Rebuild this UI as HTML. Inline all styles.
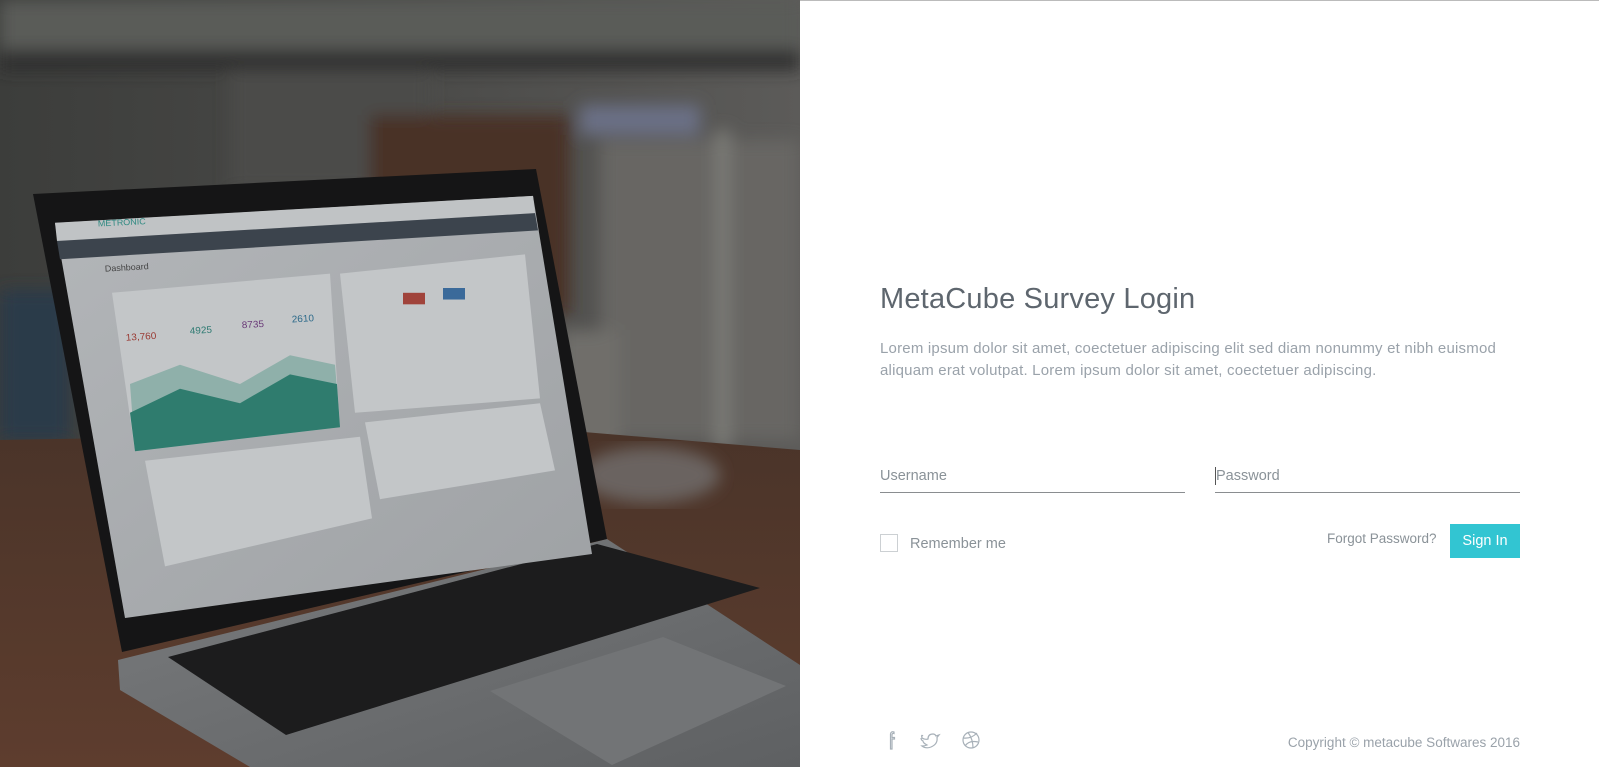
<!DOCTYPE html>
<html><head><meta charset="utf-8"><style>
*{margin:0;padding:0;box-sizing:border-box}
html,body{width:1599px;height:767px;overflow:hidden;background:#fff;font-family:"Liberation Sans",sans-serif}
#left{position:absolute;left:0;top:0;width:800px;height:767px}
#right{position:absolute;left:800px;top:0;width:799px;height:767px;border-top:1px solid #bbb}
.t{position:absolute;white-space:nowrap}
</style></head><body>
<div id="left">
<svg width="800" height="767" viewBox="0 0 800 767">
<defs>
<linearGradient id="bg" x1="0" y1="0" x2="1" y2="0"><stop offset="0" stop-color="#3c3d3b"/><stop offset=".5" stop-color="#4a4a48"/><stop offset="1" stop-color="#5c5b59"/></linearGradient>
<linearGradient id="tab" x1="0" y1="0" x2="0" y2="1"><stop offset="0" stop-color="#4a3429"/><stop offset="1" stop-color="#5e3d2e"/></linearGradient>
<linearGradient id="scr" x1="0" y1="0" x2="1" y2="1"><stop offset="0" stop-color="#b3b6b9"/><stop offset="1" stop-color="#9ea1a4"/></linearGradient>
<linearGradient id="deck" x1="0" y1="0" x2="1" y2="1"><stop offset="0" stop-color="#7a7c7e"/><stop offset="1" stop-color="#5e6062"/></linearGradient>
<filter id="bl"><feGaussianBlur stdDeviation="8"/></filter>
</defs>
<rect width="800" height="767" fill="url(#bg)"/>
<g filter="url(#bl)">
<rect x="0" y="0" width="800" height="50" fill="#5a5b59"/>
<rect x="0" y="50" width="800" height="20" fill="#2e2f2d"/>
<rect x="230" y="70" width="200" height="120" fill="#4c4b48"/>
<rect x="580" y="105" width="120" height="30" fill="#6a6f85"/>
<rect x="600" y="140" width="200" height="300" fill="#676663"/>
<rect x="0" y="290" width="70" height="150" fill="#2c3a48"/>
<rect x="715" y="130" width="15" height="320" fill="#7a7a76"/>
<rect x="370" y="115" width="200" height="200" fill="#4a3328"/>
<rect x="560" y="330" width="60" height="130" fill="#6f6e6a"/>
</g>
<polygon points="0,440 560,430 800,450 800,767 0,767" fill="url(#tab)"/>
<ellipse cx="650" cy="475" rx="70" ry="28" fill="#6a6460" filter="url(#bl)"/>
<!-- deck -->
<polygon points="118,660 607,539 800,665 800,767 250,767 120,690" fill="url(#deck)"/>
<polygon points="168,657 597,544 760,588 286,735" fill="#1c1c1d"/>
<polygon points="490,691 663,637 786,686 612,765" fill="#727476"/>
<!-- lid -->
<polygon points="33,194 536,169 607,539 122,652" fill="#151516"/>
<polygon points="55,223 533,196 592,554 125,618" fill="url(#scr)"/>
<g transform="scale(1,0.96)">
<polygon points="55,232 533,204 535,222 57,251" fill="#c0c3c5"/>
<polygon points="57,251 535,222 538,240 60,270" fill="#3c444d"/>
<text x="98" y="236" font-size="9" fill="#2f8a82" transform="rotate(-3 98 236)">METRONIC</text>
<text x="105" y="283" font-size="9" fill="#444" transform="rotate(-3.5 105 283)">Dashboard</text>
<polygon points="112,305 330,285 340,445 135,470" fill="#c3c6c8"/>
<polygon points="130,400 180,380 240,400 290,370 335,380 340,445 135,470" fill="#8fb0aa"/>
<polygon points="130,430 180,405 240,420 290,390 337,400 340,445 135,470" fill="#2f7c6e"/>
<text x="126" y="355" font-size="10" fill="#9a3a34" transform="rotate(-4 126 355)">13,760</text>
<text x="190" y="348" font-size="10" fill="#2d7a72" transform="rotate(-4 190 348)">4925</text>
<text x="242" y="342" font-size="10" fill="#6a3a78" transform="rotate(-4 242 342)">8735</text>
<text x="292" y="336" font-size="10" fill="#2d6a8a" transform="rotate(-4 292 336)">2610</text>
<polygon points="340,285 525,265 540,415 355,430" fill="#c3c6c8"/>
<polygon points="365,440 540,420 555,490 380,520" fill="#c3c6c8"/>
<polygon points="145,480 360,455 372,540 165,590" fill="#c3c6c8"/>
<rect x="403" y="305" width="22" height="12" fill="#a0433b"/>
<rect x="443" y="300" width="22" height="12" fill="#3b6a9a"/>
</g>
</svg>
</div>
<div id="right">
<div class="t" style="left:80px;top:282px;font-size:29px;color:#5e666e;letter-spacing:.2px">MetaCube Survey Login</div>
<div class="t" style="left:80px;top:337px;font-size:15px;line-height:22px;color:#9aa2aa;letter-spacing:.2px">Lorem ipsum dolor sit amet, coectetuer adipiscing elit sed diam nonummy et nibh euismod<br>aliquam erat volutpat. Lorem ipsum dolor sit amet, coectetuer adipiscing.</div>
<div class="t" style="left:80px;top:467px;font-size:14.5px;color:#8a9298">Username</div>
<div style="position:absolute;left:80px;top:491px;width:305px;height:1px;background:#8a8d90"></div>
<div style="position:absolute;left:415px;top:466px;width:1px;height:18px;background:#555"></div>
<div class="t" style="left:416px;top:467px;font-size:14.5px;color:#8a9298">Password</div>
<div style="position:absolute;left:415px;top:491px;width:305px;height:1px;background:#8a8d90"></div>
<div style="position:absolute;left:80px;top:533px;width:18px;height:18px;border:1px solid #ccd0d3"></div>
<div class="t" style="left:110px;top:535px;font-size:14.5px;color:#8a9298">Remember me</div>
<div class="t" style="left:527px;top:530px;font-size:13.5px;color:#8a9298">Forgot Password?</div>
<div style="position:absolute;left:650px;top:523px;width:70px;height:34px;background:#32c5d2;color:#fff;font-size:14.5px;text-align:center;line-height:34px">Sign In</div>
<svg style="position:absolute;left:83px;top:728px" width="110" height="22" viewBox="0 0 110 22" fill="none" stroke="#a7b0b8" stroke-width="1.2">
<path d="M11 3 Q8 2 7.5 5 V20 H9 V10 H11.5 V8.5 H9 V5.5 Q9.5 4 11 4.5 Z"/>
<path d="M40 7 Q38 5 39 9 Q42 11 45 10 Q45 5 50 5 Q52 5 53 7 L56 6 L54 8.5 Q55 15 48 18 Q43 20 39 17 Q42 17 44 16 Q40 14 40 12 Q38 11 38 9"/>
<circle cx="88" cy="11" r="8"/><path d="M80.5 9 Q88 10 94 4 M82 17 Q86 11 95 13 M85 3.5 Q90 10 90 19"/>
</svg>
<div class="t" style="right:79px;top:734px;font-size:13.5px;color:#9aa2aa">Copyright © metacube Softwares 2016</div>
</div>
</body></html>
